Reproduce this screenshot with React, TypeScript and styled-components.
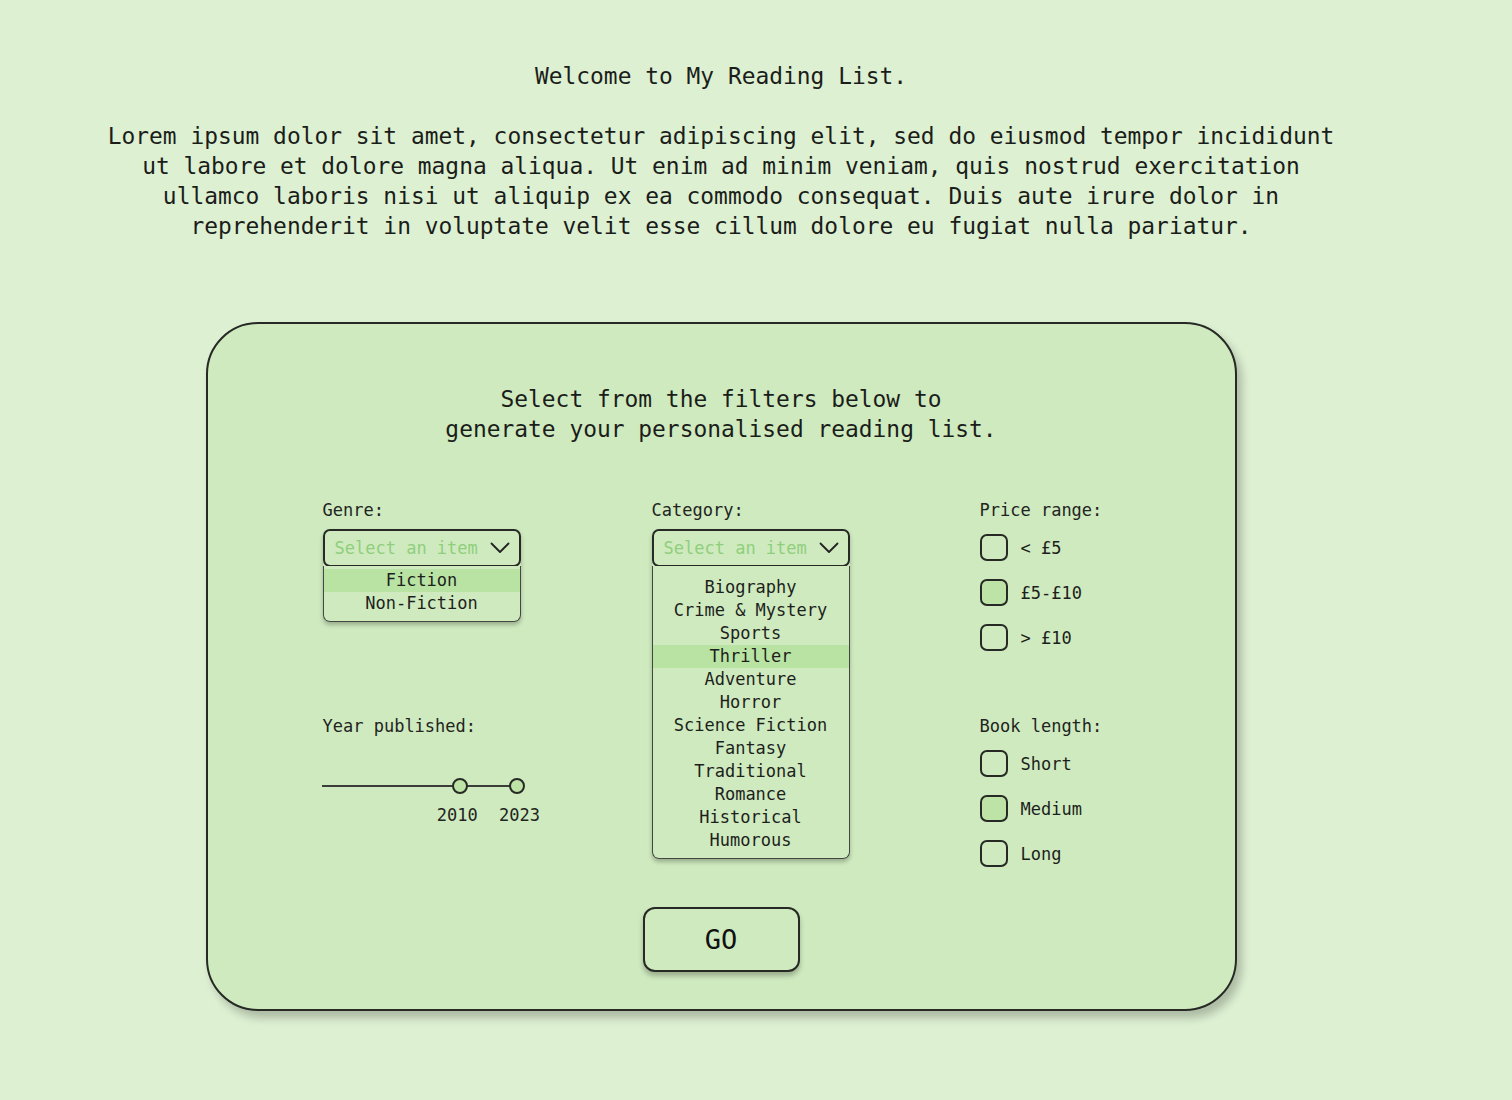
import styled, { createGlobalStyle } from 'styled-components';

const GlobalStyle = createGlobalStyle`
  html, body {
    margin: 0;
    padding: 0;
    background: #ddf0d2;
  }
  body {
    font-family: "DejaVu Sans Mono", "Liberation Mono", monospace;
    color: #1b1d1a;
  }
`;

const genres = ['Fiction', 'Non-Fiction'];
const categories = [
  'Biography',
  'Crime & Mystery',
  'Sports',
  'Thriller',
  'Adventure',
  'Horror',
  'Science Fiction',
  'Fantasy',
  'Traditional',
  'Romance',
  'Historical',
  'Humorous',
];
const prices = [
  { label: '< £5', checked: false },
  { label: '£5-£10', checked: true },
  { label: '> £10', checked: false },
];
const lengths = [
  { label: 'Short', checked: false },
  { label: 'Medium', checked: true },
  { label: 'Long', checked: false },
];

const Chevron = () => (
  <svg width="20" height="12" viewBox="0 0 20 12" fill="none">
    <path d="M1.5 1.5 L10 10 L18.5 1.5" stroke="#222" strokeWidth="1.8" strokeLinecap="round" strokeLinejoin="round" />
  </svg>
);

const Dropdown = ({ items, active, topPad }: { items: string[]; active: string; topPad: number }) => (
  <SelectWrap>
    <SelectBox>
      <span>Select an item</span>
      <Chevron />
    </SelectBox>
    <List $topPad={topPad}>
      {items.map(i => (
        <Item key={i} $active={i === active}>
          {i}
        </Item>
      ))}
    </List>
  </SelectWrap>
);

const Checks = ({ items }: { items: { label: string; checked: boolean }[] }) => (
  <CheckList>
    {items.map(i => (
      <CheckRow key={i.label}>
        <Box $checked={i.checked} />
        <span>{i.label}</span>
      </CheckRow>
    ))}
  </CheckList>
);

// slider range 1978 -> 2023, track width 195
const minYear = 1978;
const maxYear = 2023;
const yearFrom = 2010;
const yearTo = 2023;
const pos = (y: number) => ((y - minYear) / (maxYear - minYear)) * 195;

export default function App() {
  return (
    <>
      <GlobalStyle />
      <Page>
        <Intro>
          <p>Welcome to My Reading List.</p>
          <p>
            Lorem ipsum dolor sit amet, consectetur adipiscing elit, sed do eiusmod tempor incididunt
            <br />
            ut labore et dolore magna aliqua. Ut enim ad minim veniam, quis nostrud exercitation
            <br />
            ullamco laboris nisi ut aliquip ex ea commodo consequat. Duis aute irure dolor in
            <br />
            reprehenderit in voluptate velit esse cillum dolore eu fugiat nulla pariatur.
          </p>
        </Intro>

        <Card>
          <CardTitle>
            Select from the filters below to
            <br />
            generate your personalised reading list.
          </CardTitle>

          <Filters>
            <Field $col={1} $row="1">
              <Label>Genre:</Label>
              <Dropdown items={genres} active="Fiction" topPad={3} />
            </Field>

            <Field $col={2} $row="1 / span 2">
              <Label>Category:</Label>
              <Dropdown items={categories} active="Thriller" topPad={10} />
            </Field>

            <Field $col={3} $row="1">
              <Label>Price range:</Label>
              <Checks items={prices} />
            </Field>

            <Field $col={1} $row="2">
              <Label>Year published:</Label>
              <Slider>
                <Track />
                <Thumb style={{ left: pos(yearFrom) }} />
                <Thumb style={{ left: pos(yearTo) }} />
                <YearLabel style={{ left: pos(yearFrom) - 3 }}>{yearFrom}</YearLabel>
                <YearLabel style={{ left: pos(yearTo) + 3 }}>{yearTo}</YearLabel>
              </Slider>
            </Field>

            <Field $col={3} $row="2">
              <Label>Book length:</Label>
              <Checks items={lengths} />
            </Field>
          </Filters>

          <GoButton>GO</GoButton>
        </Card>
      </Page>
    </>
  );
}

const Page = styled.div`
  min-height: 1100px;
  display: flex;
  flex-direction: column;
  align-items: center;
  padding: 61px 70px 0 0;
  box-sizing: border-box;
`;

const Intro = styled.div`
  text-align: center;
  font-size: 22.9px;
  line-height: 30px;
  color: #1b1d1a;
  p {
    margin: 0;
  }
  p + p {
    margin-top: 30px;
  }
`;

const Card = styled.div`
  margin-top: 81px;
  width: 1031px;
  height: 689px;
  box-sizing: border-box;
  background: #cfeabf;
  border: 2px solid #262924;
  border-radius: 52px;
  box-shadow: 5px 7px 8px rgba(0, 0, 0, 0.22);
  padding: 60px 0 0 115px;
  display: flex;
  flex-direction: column;
`;

const CardTitle = styled.div`
  font-size: 22.9px;
  line-height: 30px;
  text-align: center;
  margin-left: -115px;
`;

const Filters = styled.div`
  margin-top: 55px;
  display: grid;
  grid-template-columns: 329px 328px 160px;
  grid-template-rows: 216px auto;
  height: 359px;
`;

const Field = styled.div<{ $col: number; $row: string }>`
  display: flex;
  flex-direction: column;
  align-items: flex-start;
  grid-column: ${p => p.$col};
  grid-row: ${p => p.$row};
`;

const Label = styled.div`
  font-size: 17px;
  line-height: 22px;
  color: #222421;
  margin-bottom: 8px;
`;

const SelectWrap = styled.div`
  width: 198px;
  border-radius: 7px;
  box-shadow: 0 3px 4px rgba(0, 0, 0, 0.25);
`;

const SelectBox = styled.div`
  height: 38px;
  box-sizing: border-box;
  border: 2px solid #262924;
  border-radius: 7px;
  display: flex;
  align-items: center;
  justify-content: space-between;
  padding: 0 9px 0 10px;
  background: #cfeabf;
  span {
    font-size: 17px;
    color: #8fcf7c;
  }
`;

const List = styled.div<{ $topPad: number }>`
  margin-top: -1px;
  border: 1.5px solid #434641;
  border-top: none;
  border-radius: 0 0 7px 7px;
  padding: ${p => p.$topPad}px 0 6px;
  background: #cfeabf;
`;

const Item = styled.div<{ $active: boolean }>`
  font-size: 17px;
  line-height: 23px;
  text-align: center;
  color: #1d1f1c;
  background: ${p => (p.$active ? '#b9e3a3' : 'transparent')};
`;

const CheckList = styled.div`
  display: flex;
  flex-direction: column;
  gap: 18px;
  margin-top: 5px;
`;

const CheckRow = styled.div`
  display: flex;
  align-items: center;
  gap: 13px;
  font-size: 17px;
  color: #1d1f1c;
`;

const Box = styled.div<{ $checked: boolean }>`
  width: 28px;
  height: 27px;
  box-sizing: border-box;
  border: 2px solid #262924;
  border-radius: 7px;
  background: ${p => (p.$checked ? '#bde4a6' : 'transparent')};
`;

const Slider = styled.div`
  position: relative;
  width: 195px;
  height: 80px;
  margin-left: -1px;
`;

const Track = styled.div`
  position: absolute;
  left: 0;
  right: 0;
  top: 40px;
  height: 2px;
  background: #3a3d38;
`;

const Thumb = styled.div`
  position: absolute;
  top: 33px;
  width: 16px;
  height: 16px;
  margin-left: -8px;
  box-sizing: border-box;
  border: 2px solid #262924;
  border-radius: 50%;
  background: #bde4a6;
`;

const YearLabel = styled.div`
  position: absolute;
  top: 59px;
  transform: translateX(-50%);
  font-size: 17px;
  line-height: 22px;
  color: #222421;
`;

const GoButton = styled.button`
  align-self: center;
  margin-left: -115px;
  margin-top: 49px;
  width: 157px;
  height: 65px;
  border: 2px solid #262924;
  border-radius: 12px;
  background: #cfeabf;
  box-shadow: 0 4px 5px rgba(0, 0, 0, 0.25);
  font-family: "DejaVu Sans Mono", "Liberation Mono", monospace;
  font-size: 27px;
  color: #111;
  cursor: pointer;
`;
